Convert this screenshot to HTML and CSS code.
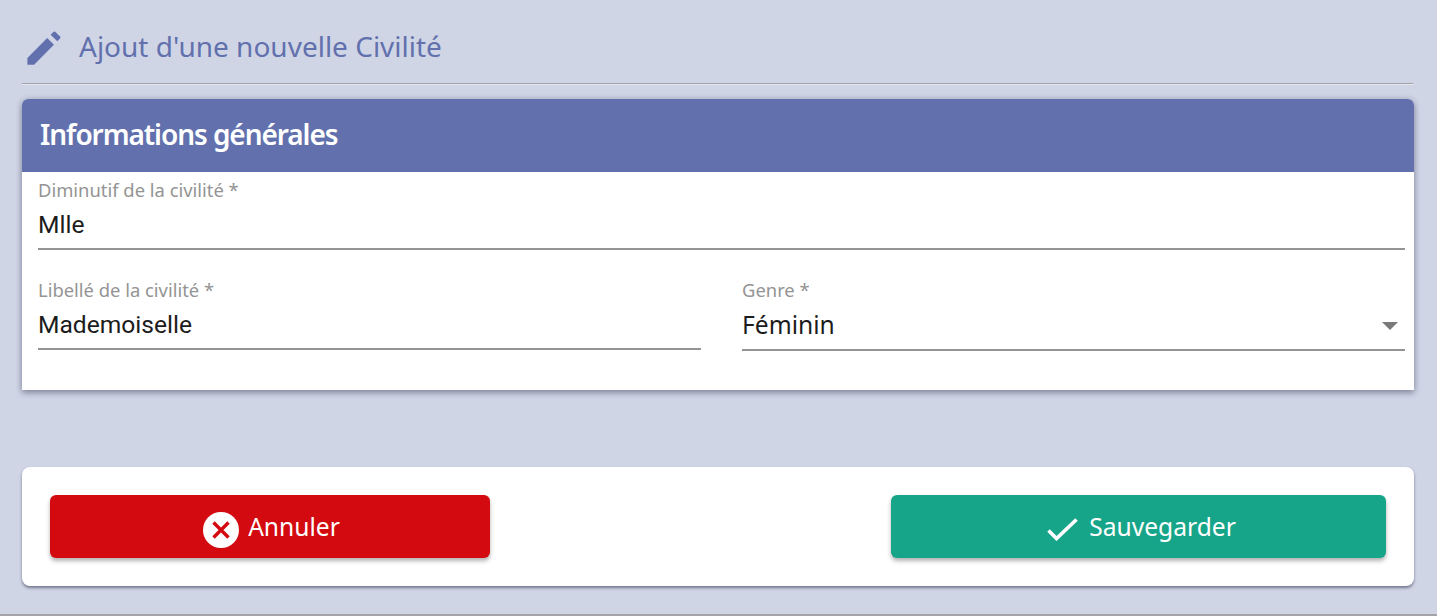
FILE: index.html
```html
<!DOCTYPE html>
<html lang="fr">
<head>
<meta charset="utf-8">
<title>Ajout d'une nouvelle Civilité</title>
<link rel="stylesheet" href="styles.css">
</head>
<body>
<main class="page">
  <header class="title-row">
    <svg class="title-icon" viewBox="0 0 24 24" aria-hidden="true"><path d="M3 17.25V21h3.75L17.81 9.94l-3.75-3.75L3 17.25z"/><path d="M21.1 6.6a1 1 0 0 0 0-1.41l-2.3-2.3a1 1 0 0 0-1.41 0l-1.4 1.4 3.7 3.7z"/></svg>
    <h1 class="title">Ajout d'une nouvelle Civilité</h1>
  </header>
  <section class="card">
    <h2 class="card-head">Informations générales</h2>
    <div class="card-body">
      <div class="field field-first">
        <span class="label">Diminutif de la civilité *</span>
        <span class="value roboto">Mlle</span>
      </div>
      <div class="field-row">
        <div class="field field-left">
          <span class="label">Libellé de la civilité *</span>
          <span class="value roboto">Mademoiselle</span>
        </div>
        <div class="field field-right">
          <span class="label">Genre *</span>
          <span class="value select">Féminin<i class="arrow"></i></span>
        </div>
      </div>
    </div>
  </section>
  <section class="actions">
    <button class="btn btn-cancel" type="button">
      <svg class="icon-cancel" viewBox="0 0 36 36" aria-hidden="true"><circle cx="18" cy="18" r="18" fill="#fff"/><path d="M10.5 10.5l15 15M25.5 10.5l-15 15" stroke="#d30a10" stroke-width="3.4" fill="none"/></svg>
      Annuler
    </button>
    <button class="btn btn-save" type="button">
      <svg class="icon-check" viewBox="0 0 31 23" aria-hidden="true"><path d="M1.5 12.6l8 8L29.5 1.5" stroke="#fff" stroke-width="3.6" fill="none"/></svg>
      Sauvegarder
    </button>
  </section>
</main>
</body>
</html>
```
FILE: styles.css
```css
* { box-sizing: border-box; }
html, body { margin: 0; height: 100%; overflow: hidden; }
body {
  background: #d0d5e6;
  font-family: "Noto Sans", "Liberation Sans", sans-serif;
}
.page {
  height: 616px;
  padding: 0 23px 0 22px;
  border-bottom: 2px solid #a4a4a8;
}
.title-row {
  display: flex;
  align-items: center;
  height: 84px;
  margin-right: 1px;
  padding-top: 9px;
  border-bottom: 1px solid #a3a4a8;
  box-shadow: 0 1px 0 #e6e8f0;
}
.title-icon { width: 43px; height: 43px; margin-top: 4px; fill: #6271ad; flex: none; }
.title {
  margin: 0 0 0 14px;
  font-size: 28px;
  font-weight: 400;
  color: #6271ad;
}
.card {
  margin-top: 15px;
  background: #fff;
  border-radius: 6px 6px 0 0;
  box-shadow: 0 3px 6px rgba(40, 44, 70, .4), 0 0 6px rgba(40, 44, 70, .18);
  height: 291px;
}
.card-head {
  margin: 0;
  height: 73px;
  line-height: 70px;
  padding-left: 18px;
  background: #6271ad;
  border-radius: 6px 6px 0 0;
  color: #fff;
  font-size: 28px;
  font-weight: 600;
  letter-spacing: -1.07px;
}
.card-body { padding: 6px 9px 0 16px; }
.field { display: flex; flex-direction: column; border-bottom: 2px solid #949494; }
.field-first { height: 72px; }
.field-row { display: flex; gap: 41px; margin-top: 28px; }
.field-left { flex: 1; height: 72px; }
.field-right { flex: 1; height: 73px; }
.label { font-size: 18.4px; line-height: 24px; color: #949494; }
.value { font-size: 24.6px; line-height: 34px; margin-top: 6px; color: #1c1c1c; }
.roboto { font-family: Roboto, sans-serif; }
.select { position: relative; }
.arrow {
  position: absolute;
  right: 7px;
  top: 14px;
  border-style: solid;
  border-width: 8px 8px 0;
  border-color: #7a7a7a transparent transparent;
}
.actions {
  margin-top: 77px;
  height: 119px;
  padding: 28px 28px 0;
  display: flex;
  justify-content: space-between;
  background: #fff;
  border-radius: 8px;
  box-shadow: 0 2px 3px rgba(40, 44, 70, .55);
}
.btn {
  height: 63px;
  border: 0;
  border-radius: 6px;
  color: #fff;
  font: 400 24.6px "Noto Sans", sans-serif;
  display: flex;
  align-items: center;
  justify-content: center;
  box-shadow: 0 3px 4px rgba(0, 0, 0, .3);
}
.btn-cancel { width: 440px; background: #d30a10; gap: 9px; padding: 0 0 0 3px; }
.btn-save { width: 495px; background: #17a589; gap: 11px; padding: 0 0 0 6px; }
.icon-cancel { width: 36px; height: 36px; margin-top: 6px; }
.icon-check { width: 31px; height: 23px; margin-top: 6px; }
```
